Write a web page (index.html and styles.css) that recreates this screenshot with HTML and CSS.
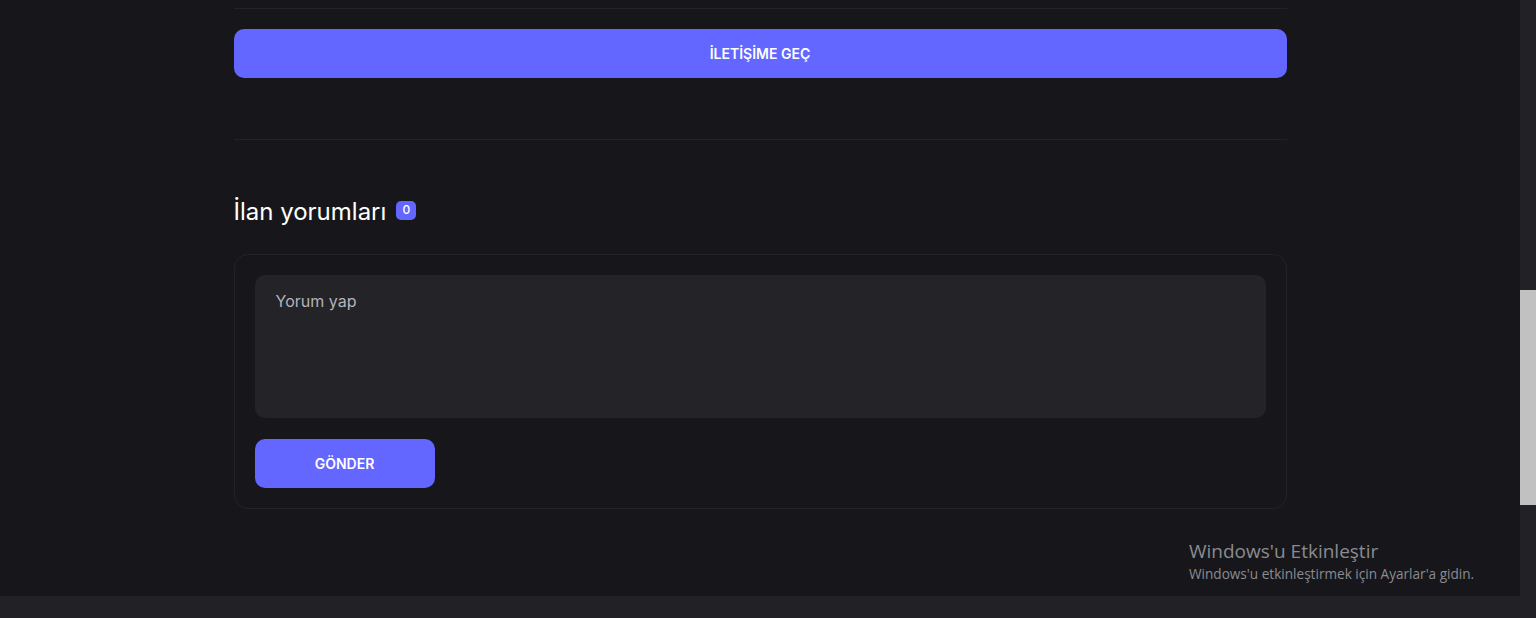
FILE: index.html
```html
<!DOCTYPE html>
<html lang="tr">
<head>
<meta charset="utf-8">
<title>İlan</title>
<link rel="stylesheet" href="styles.css">
</head>
<body>
<div class="screen">
  <div class="viewport">
    <main class="page">
      <div class="container">
        <hr class="divider first">
        <button class="btn btn-wide">İLETİŞİME GEÇ</button>
        <hr class="divider second">
        <h2 class="section-title">İlan yorumları <span class="badge">0</span></h2>
        <div class="card">
          <textarea class="comment" placeholder="Yorum yap"></textarea>
          <button class="btn btn-send">GÖNDER</button>
        </div>
      </div>
    </main>
    <div class="vscroll"><div class="thumb"></div></div>
  </div>
  <div class="hscroll"></div>
  <div class="watermark">
    <div class="wm-title">Windows'u Etkinleştir</div>
    <div class="wm-sub">Windows'u etkinleştirmek için Ayarlar'a gidin.</div>
  </div>
</div>
</body>
</html>
```
FILE: styles.css
```css
* { box-sizing: border-box; }
html, body { margin: 0; padding: 0; }
body {
  background: #222226;
  font-family: Inter, "Noto Sans", sans-serif;
  color: #fff;
  overflow: hidden;
}
.screen {
  position: relative;
  width: 1536px;
  height: 618px;
  display: flex;
  flex-direction: column;
}
.viewport {
  display: flex;
  height: 596px;
}
.page {
  flex: 1;
  background: #17171b;
  overflow: hidden;
}
.container {
  width: 1053px;
  margin: 0 auto;
  padding-top: 8px;
  display: flex;
  flex-direction: column;
}
.divider {
  border: 0;
  height: 1px;
  background: #232327;
  margin: 0;
}
.btn {
  border: 0;
  background: #6366ff;
  color: #fff;
  font-family: Inter, "Noto Sans", sans-serif;
  font-size: 14px;
  font-weight: 600;
  height: 49px;
  border-radius: 10px;
  cursor: pointer;
}
.btn-wide {
  width: 100%;
  margin-top: 20px;
}
.divider.second {
  margin-top: 61px;
}
.section-title {
  margin: 57px 0 0;
  font-size: 24px;
  font-weight: 400;
  line-height: 30px;
  height: 30px;
  display: flex;
  align-items: center;
  gap: 10px;
}
.badge {
  display: inline-flex;
  align-items: center;
  justify-content: center;
  width: 20px;
  height: 19px;
  border-radius: 5px;
  background: #6366ff;
  font-size: 12px;
  font-weight: 500;
  margin-top: -4px;
}
.card {
  margin-top: 27px;
  border: 1px solid #232327;
  border-radius: 14px;
  padding: 20px;
  display: flex;
  flex-direction: column;
  align-items: flex-start;
  gap: 21px;
}
.comment {
  width: 100%;
  height: 143px;
  resize: none;
  border: 0;
  outline: none;
  background: #232328;
  border-radius: 10px;
  padding: 16px 21px;
  color: #fff;
  font-family: Inter, "Noto Sans", sans-serif;
  font-size: 16px;
  line-height: 20px;
}
.comment::placeholder { color: #b4b4ba; }
.btn-send {
  width: 180px;
}
.vscroll {
  width: 16px;
  background: #222226;
  position: relative;
}
.thumb {
  position: absolute;
  left: 0;
  right: 0;
  top: 290px;
  height: 215px;
  background: #c1c1c1;
}
.hscroll {
  height: 22px;
  background: #222226;
}
.watermark {
  position: absolute;
  left: 1189px;
  top: 538px;
  color: #8b8b90;
  font-family: "Open Sans", "Noto Sans", sans-serif;
}
.wm-title { font-size: 19px; line-height: 26px; }
.wm-sub { font-size: 13.6px; line-height: 20px; }
```
